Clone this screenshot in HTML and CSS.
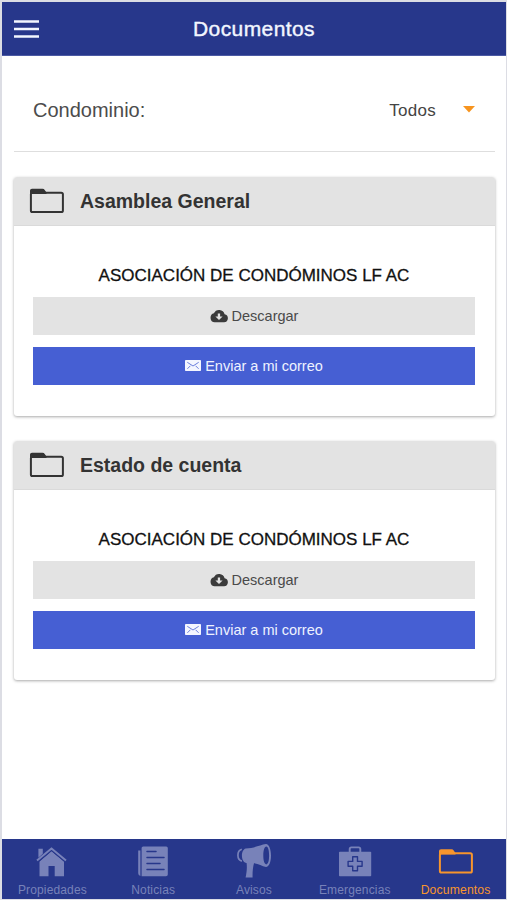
FILE: index.html
```html
<!DOCTYPE html>
<html lang="es">
<head>
<meta charset="utf-8">
<title>Documentos</title>
<link rel="stylesheet" href="styles.css">
</head>
<body>
<svg class="defs" width="0" height="0">
  <symbol id="folder" viewBox="0 0 36 26"><rect x="1.9" y="4.7" width="32" height="19.4" rx="1.6" fill="none" stroke="currentColor" stroke-width="2"/><path d="M1 6V2.5Q1 .7 3 .7h10.5q1.5 0 2.2 1.3l1.8 2.5V6z" fill="currentColor"/></symbol>
  <symbol id="cloud" viewBox="0 0 18 14"><path fill="currentColor" fill-rule="evenodd" d="M14.6 5.2A5.7 5.7 0 0 0 3.9 4.3 4.6 4.6 0 0 0 4.7 13.3h9.4a4.1 4.1 0 0 0 .5-8.1zM7.8 4.4h2.3v3h2.5L9 11 5.4 7.4h2.4z"/></symbol>
  <symbol id="mail" viewBox="0 0 16 11"><rect width="16" height="11" rx=".8" fill="#f4f6ff"/><path d="M2.3 2.3 8 6l5.7-3.7M2.4 8.8l3-3M13.6 8.8l-3-3" fill="none" stroke="#465fd3" stroke-width=".8"/></symbol>
</svg>
<div class="app">
  <header class="topbar">
    <svg class="menu" viewBox="0 0 25 18"><path d="M0 1.5h25M0 9h25M0 16.4h25" stroke="#f2f6ff" stroke-width="2.5"/></svg>
    <h1>Documentos</h1>
  </header>
  <main>
    <div class="filter">
      <span class="filter-label">Condominio:</span>
      <span class="filter-value">Todos</span>
      <svg class="caret" viewBox="0 0 12 7"><path d="M0 0h12L6 6.5z" fill="#f7941e"/></svg>
    </div>
    <section class="card">
      <h2><svg class="folder"><use href="#folder"/></svg>Asamblea General</h2>
      <div class="card-body">
        <h3>ASOCIACIÓN DE CONDÓMINOS LF AC</h3>
        <button class="btn"><svg class="cloud"><use href="#cloud"/></svg>Descargar</button>
        <button class="btn primary"><svg class="mail"><use href="#mail"/></svg>Enviar a mi correo</button>
      </div>
    </section>
    <section class="card">
      <h2><svg class="folder"><use href="#folder"/></svg>Estado de cuenta</h2>
      <div class="card-body">
        <h3>ASOCIACIÓN DE CONDÓMINOS LF AC</h3>
        <button class="btn"><svg class="cloud"><use href="#cloud"/></svg>Descargar</button>
        <button class="btn primary"><svg class="mail"><use href="#mail"/></svg>Enviar a mi correo</button>
      </div>
    </section>
  </main>
  <nav class="tabs">
    <a class="tab"><svg class="tab-icon" viewBox="0 0 36 36"><path fill="currentColor" d="M4.4 7.2h4.4v5l-4.4 4zM17.5 9.8 30 20v14.7h-9.3V24.5h-6.2v10.2H5.5V20z"/><path fill="none" stroke="#27378b" stroke-width="1" d="M4 20.5 17.5 9.2 31 20.5"/><path fill="none" stroke="currentColor" stroke-width="2" d="M3 19 17.5 7 32 19"/></svg>Propiedades</a>
    <a class="tab"><svg class="tab-icon" viewBox="0 0 36 36"><path fill="currentColor" d="M8.2 5h23q1.6 0 1.6 1.6v26.3q0 1.8-1.8 1.8H6.6V6.5q0-1.5 1.6-1.5zM3.2 9h2.2v25.4q-2.2-.6-2.2-2.6z"/><path stroke="#27378b" stroke-width="1.5" stroke-linecap="round" d="M12 9.9h9M12 15.9h17M12 21.9h13M12 27.9h17"/></svg>Noticias</a>
    <a class="tab"><svg class="tab-icon" viewBox="0 0 36 36"><path fill="currentColor" fill-rule="evenodd" d="M30 2.6c3 0 5 5.4 5 11.6s-2 11.2-5 11.2c-4-.4-7.2-3.4-12-3.7-1.2 4.2-1.6 9.2-1.4 14.3H9.6c1-5 1.6-9.2 1-14.5C4.8 21 4.2 8.4 9.8 6.9 18 6.9 24 3.4 30 2.6zM30.3 5c-1.9 0-3 4.2-3 9.1s1.1 8.8 3 8.8 2.8-3.9 2.8-8.8S32.200 5 30.300 5z"/><path fill="none" stroke="currentColor" stroke-width="1.7" d="M5.8 7.8C.6 9.300.6 18.200 5.9 19.600"/></svg>Avisos</a>
    <a class="tab"><svg class="tab-icon" viewBox="0 0 36 36"><path fill="none" stroke="currentColor" stroke-width="1.9" d="M12.7 11V7.600q0-1.700 1.700-1.700h7.200q1.700 0 1.700 1.700v3.400"/><rect x="2" y="10.300" width="32.200" height="24.400" rx=".8" fill="currentColor"/><path fill="none" stroke="#27378b" stroke-width="1.400" stroke-linejoin="round" d="M15.700 15.300h4.800v4.600h4.600v4.800h-4.600v4.600h-4.800v-4.600h-4.600v-4.800h4.600z"/></svg>Emergencias</a>
    <a class="tab active"><svg class="tab-icon"><use href="#folder" x="0" y="7.500" width="36" height="26"/></svg>Documentos</a>
  </nav>
</div>
</body>
</html>
```
FILE: styles.css
```css
* { box-sizing: border-box; }
body { margin: 0; font-family: "Liberation Sans", Arial, sans-serif; background: #fff; }
.defs { display: none; }
h1, h2, h3 { margin: 0; }
.app {
  height: 900px;
  display: flex;
  flex-direction: column;
  border: solid #dcdde4;
  border-width: 2px 1px 1px 2px;
}
.topbar {
  height: 54px;
  flex: none;
  background: #27378b;
  display: grid;
  grid-template-columns: 37px 1fr 37px;
  align-items: center;
  border-bottom: 1px solid #4c5aa4;
}
.menu { width: 25px; height: 18px; margin-left: 12px; }
.topbar h1 {
  color: #f2f6ff;
  font-size: 21px;
  line-height: 24px;
  font-weight: 400;
  letter-spacing: .4px;
  text-align: center;
  -webkit-text-stroke: .4px #f2f6ff;
}
main { flex: 1; padding: 0 11px 0 12px; }
.filter {
  height: 96px;
  margin-bottom: 25px;
  padding: 14px 20px 0 19px;
  display: flex;
  align-items: center;
  border-bottom: 1px solid #dedede;
  color: #4c4c4c;
}
.filter-label { flex: 1; font-size: 20px; }
.filter-value { font-size: 17px; letter-spacing: .3px; color: #444; }
.caret { width: 12px; height: 7px; margin: 0 0 3px 27px; }
.card {
  height: 239px;
  margin: 0 0 25px;
  border-radius: 3px;
  overflow: hidden;
  background: #fff;
  box-shadow: 0 1px 3px rgba(0, 0, 0, .34);
}
.card h2 {
  height: 49px;
  display: flex;
  align-items: center;
  gap: 15px;
  padding-left: 15px;
  background: #e3e3e3;
  border-bottom: 1px solid #dadada;
  color: #333;
  font-size: 19.5px;
}
.folder { width: 36px; height: 26px; flex: none; }
.card-body { padding: 39px 20px 0 19px; }
.card h3 {
  color: #111;
  font-size: 17px;
  line-height: 22px;
  font-weight: 400;
  text-align: center;
  white-space: nowrap;
  -webkit-text-stroke: .3px #111;
}
.btn {
  width: 100%;
  height: 38px;
  margin: 10px 0 0;
  padding: 0;
  border: 0;
  display: flex;
  align-items: center;
  justify-content: center;
  gap: 4px;
  background: #e3e3e3;
  color: #4a4a4a;
  font: 14.5px "Liberation Sans", Arial, sans-serif;
}
.btn.primary { margin-top: 12px; background: #465fd3; color: #eef2ff; }
.cloud { width: 18px; height: 14px; margin-bottom: 1px; color: #3b3b3b; }
.mail { width: 16px; height: 11px; margin-bottom: 2px; }
.tabs {
  height: 60px;
  flex: none;
  display: grid;
  grid-template-columns: repeat(5, 1fr);
  background: #27378b;
}
.tab {
  display: flex;
  flex-direction: column;
  align-items: center;
  padding-top: 2px;
  color: #7882b9;
  font-size: 12px;
  line-height: 14px;
  letter-spacing: .15px;
}
.tab-icon { width: 36px; height: 37px; margin-bottom: 5px; }
.tab.active { color: #f7952d; font-size: 12.2px; }
```
